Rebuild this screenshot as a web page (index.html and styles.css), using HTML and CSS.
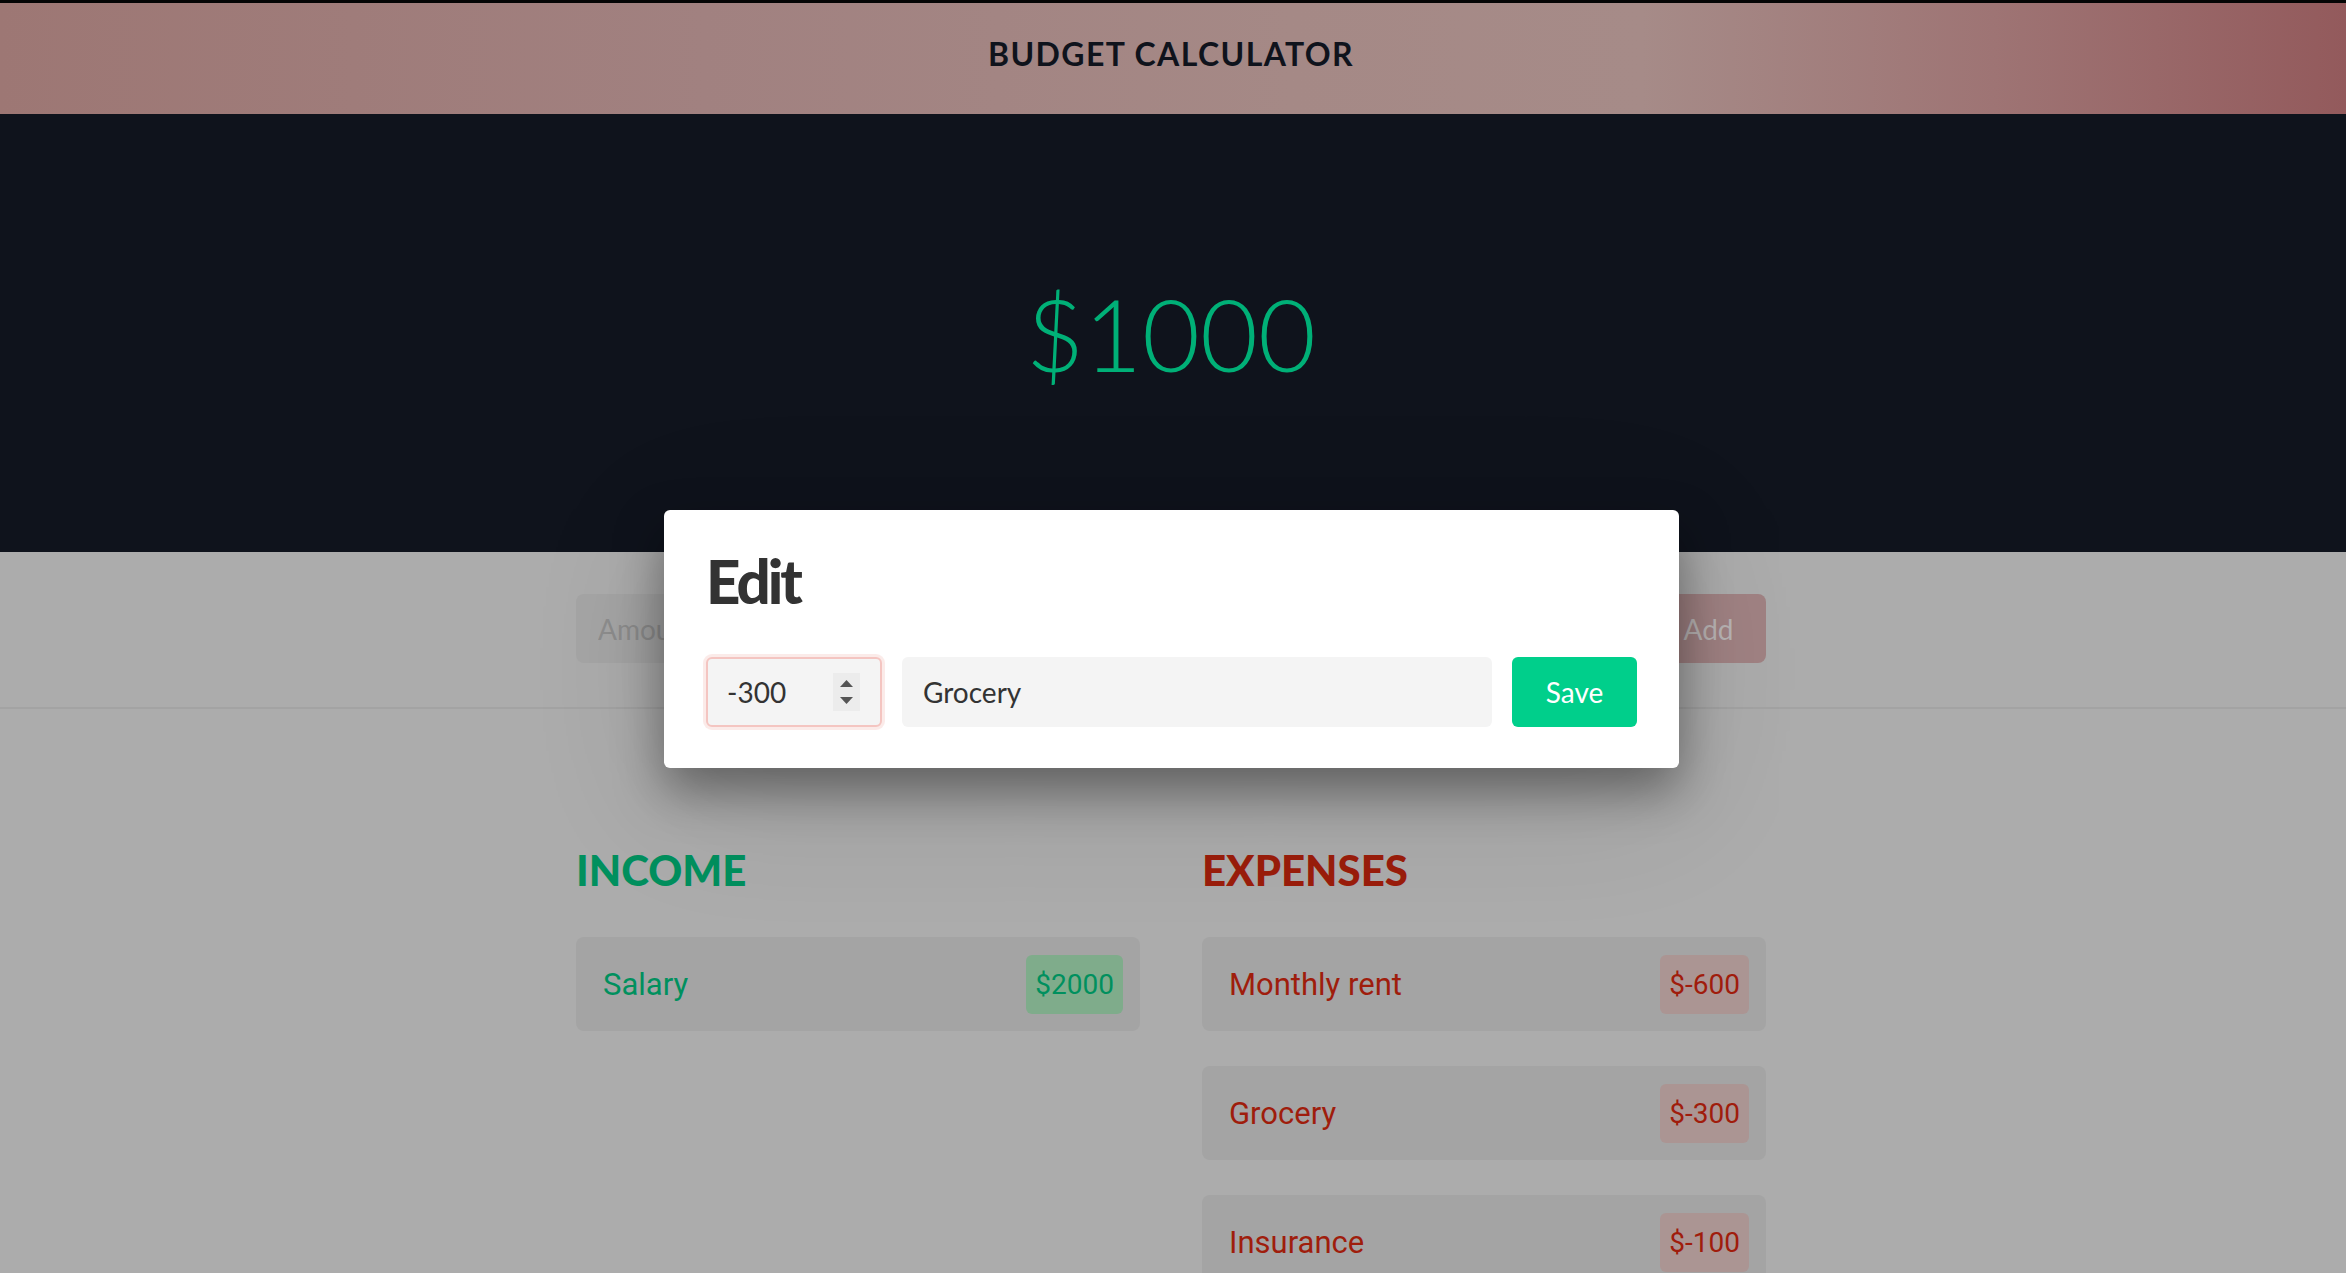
FILE: index.html
```html
<!DOCTYPE html>
<html lang="en">
<head>
<meta charset="utf-8">
<title>Budget Calculator</title>
<link rel="stylesheet" href="styles.css">
</head>
<body>
<header class="topbar">
  <h1 class="title">BUDGET CALCULATOR</h1>
</header>

<section class="balance">
  <div class="balance-value">$1000</div>
</section>

<section class="form-area">
  <form class="entry-form container">
    <input class="field amount-field" type="text" placeholder="Amount">
    <input class="field desc-field" type="text" placeholder="">
    <button class="add-btn" type="button">Add</button>
  </form>
</section>

<main class="lists container">
  <section class="column">
    <h2 class="col-title income-title">INCOME</h2>
    <div class="item income-item">
      <span class="item-name">Salary</span>
      <span class="badge income-badge">$2000</span>
    </div>
  </section>
  <section class="column">
    <h2 class="col-title expense-title">EXPENSES</h2>
    <div class="item expense-item">
      <span class="item-name">Monthly rent</span>
      <span class="badge expense-badge">$-600</span>
    </div>
    <div class="item expense-item">
      <span class="item-name">Grocery</span>
      <span class="badge expense-badge">$-300</span>
    </div>
    <div class="item expense-item">
      <span class="item-name">Insurance</span>
      <span class="badge expense-badge">$-100</span>
    </div>
  </section>
</main>

<div class="modal">
  <h2 class="modal-title">Edit</h2>
  <div class="modal-row">
    <div class="num-field">
      <input class="num-input" type="text" value="-300">
      <span class="spinner">
        <svg width="27" height="38" viewBox="0 0 27 38"><polygon points="7,14 13.5,7 20,14" fill="#555"/><polygon points="7,24 20,24 13.5,31" fill="#555"/></svg>
      </span>
    </div>
    <input class="text-input" type="text" value="Grocery">
    <button class="save-btn" type="button">Save</button>
  </div>
</div>
</body>
</html>
```

FILE: styles.css
```css
* { box-sizing: border-box; }

html, body {
  margin: 0;
  padding: 0;
}

body {
  background: #acacac;
  font-family: "Lato", "Liberation Sans", sans-serif;
  min-height: 1273px;
  position: relative;
  overflow: hidden;
}

.container {
  width: 1190px;
  margin-left: calc(50% - 597px);
}

/* Header */
.topbar {
  border-top: 3px solid #050505;
  height: 114px;
  padding-top: 32px;
  background: linear-gradient(90deg, #9d7774 0%, #a18180 30%, #a58986 55%, #a68b88 70%, #9e7474 85%, #935a5c 100%);
  text-align: center;
}

.title {
  margin: 0;
  font-family: "Lato", sans-serif;
  font-weight: 700;
  font-size: 32px;
  line-height: 38px;
  letter-spacing: 1.4px;
  color: #0f131c;
  padding-right: 4px;
}

/* Balance */
.balance {
  height: 438px;
  background: #0f131c;
  display: flex;
  align-items: center;
  justify-content: center;
}

.balance-value {
  font-family: "Lato", sans-serif;
  font-weight: 300;
  font-size: 100px;
  line-height: 120px;
  color: #00b077;
  padding-right: 4px;
}

/* Form area */
.form-area {
  padding: 42px 0 44px;
  border-bottom: 2px solid #a3a3a3;
}

.entry-form {
  display: flex;
  gap: 20px;
  height: 69px;
  margin-top: 0;
  margin-bottom: 0;
}

.field {
  height: 69px;
  border: none;
  border-radius: 8px;
  background: #a5a5a5;
  padding: 0 22px;
  font-family: "Lato", sans-serif;
  font-size: 28px;
  color: #555;
  outline: none;
}

.field::placeholder { color: #8d8d8d; }

.amount-field { width: 300px; }
.desc-field { flex: 1; }

.add-btn {
  width: 115px;
  height: 69px;
  border: none;
  border-radius: 8px;
  background: #a08283;
  color: #b9b4b4;
  font-family: "Lato", sans-serif;
  font-size: 28px;
}

/* Lists */
.lists {
  display: grid;
  grid-template-columns: 564px 564px;
  column-gap: 62px;
  padding-top: 136px;
}

.col-title {
  margin: 0 0 42px;
  font-family: "Lato", sans-serif;
  font-weight: 900;
  font-size: 42px;
  line-height: 50px;
}

.income-title { color: #00905e; }
.expense-title { color: #9b1d0b; }

.item {
  height: 94px;
  margin-bottom: 35px;
  padding: 0 17px 0 27px;
  background: #a4a4a4;
  border-radius: 8px;
  display: flex;
  align-items: center;
  justify-content: space-between;
  font-family: "Roboto", sans-serif;
}

.item-name {
  font-size: 31px;
}

.badge {
  height: 59px;
  line-height: 59px;
  padding: 0 9px;
  border-radius: 6px;
  font-size: 28px;
}

.income-item { color: #00905e; }
.income-badge { background: #7fac8b; color: #00905e; }

.expense-item { color: #9f1d0c; }
.expense-badge { background: #ab9593; color: #a01c0c; }

/* Modal */
.modal {
  position: absolute;
  top: 510px;
  left: calc(50% - 509px);
  width: 1015px;
  padding: 35px 42px 41px;
  background: #ffffff;
  border-radius: 6px;
  box-shadow: 0 22px 50px rgba(0, 0, 0, 0.4), 0 30px 140px rgba(0, 0, 0, 0.12);
}

.modal-title {
  margin: 0 0 40px;
  font-family: "Lato", sans-serif;
  font-weight: 900;
  font-size: 60px;
  line-height: 72px;
  letter-spacing: -3px;
  color: #333333;
}

.modal-row {
  display: flex;
  gap: 20px;
  height: 70px;
}

.num-field {
  width: 176px;
  height: 70px;
  border: 2px solid #f4c5c1;
  border-radius: 6px;
  box-shadow: 0 0 0 3px rgba(244, 197, 193, 0.35);
  background: #f4f4f4;
  display: flex;
  align-items: center;
  padding-left: 19px;
  padding-right: 20px;
}

.num-input {
  flex: 1;
  min-width: 0;
  border: none;
  background: transparent;
  font-family: "Lato", sans-serif;
  font-size: 28px;
  color: #333;
  padding: 0;
  outline: none;
}

.spinner {
  width: 27px;
  height: 38px;
  background: #ececec;
  display: block;
}

.spinner svg { display: block; }

.text-input {
  flex: 1;
  height: 70px;
  border: none;
  border-radius: 6px;
  background: #f4f4f4;
  padding: 0 21px;
  font-family: "Lato", sans-serif;
  font-size: 28px;
  color: #333;
  outline: none;
}

.save-btn {
  width: 125px;
  height: 70px;
  border: none;
  border-radius: 6px;
  background: #00cf8b;
  color: #ffffff;
  font-family: "Lato", sans-serif;
  font-size: 28px;
}
```
